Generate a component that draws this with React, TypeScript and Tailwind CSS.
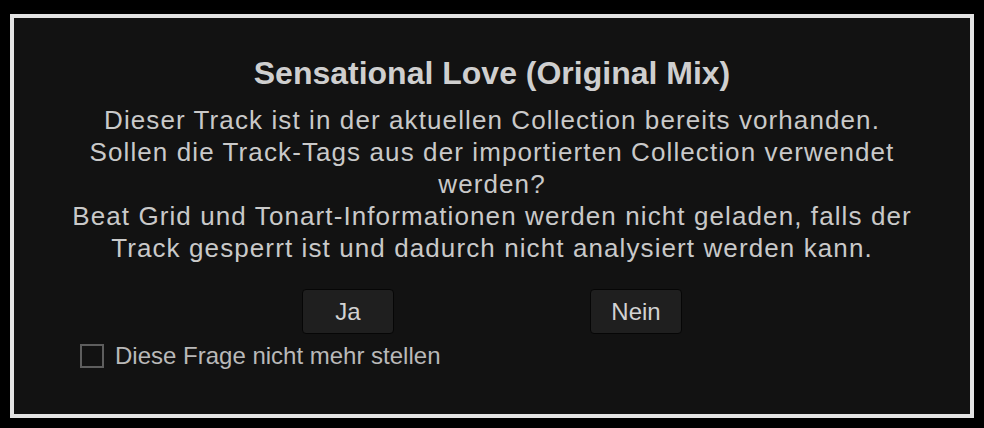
import React from "react";

const lines = [
  "Dieser Track ist in der aktuellen Collection bereits vorhanden.",
  "Sollen die Track-Tags aus der importierten Collection verwendet",
  "werden?",
  "Beat Grid und Tonart-Informationen werden nicht geladen, falls der",
  "Track gesperrt ist und dadurch nicht analysiert werden kann.",
];

export default function App() {
  return (
    <div
      className="w-[984px] h-[428px] bg-black pt-[14px] pl-[10px]"
      style={{ fontFamily: '"Liberation Sans", Arial, sans-serif' }}
    >
      <div className="w-[964px] h-[404px] border-[4px] border-[#e3e3e3] bg-[#121212] flex flex-col items-center pt-[37px]">
        <div className="text-[32px] leading-[36px] font-bold text-[#cfcfcf]">
          Sensational Love (Original Mix)
        </div>
        <div className="mt-[13px] text-[26px] leading-[32px] tracking-[1.1px] text-[#c9c9c9] text-center">
          {lines.map((l) => (
            <div key={l}>{l}</div>
          ))}
        </div>
        <div className="mt-[25px] flex gap-[196px]">
          <button className="w-[92px] h-[45px] rounded-[4px] border border-[#060606] bg-[#1f1f1f] text-[24px] leading-[24px] text-[#d2d2d2]">
            Ja
          </button>
          <button className="w-[92px] h-[45px] rounded-[4px] border border-[#060606] bg-[#1f1f1f] text-[24px] leading-[24px] text-[#d2d2d2]">
            Nein
          </button>
        </div>
        <div className="self-start ml-[66px] mt-[10px] flex items-center h-[24px] gap-[11px]">
          <div className="w-[24px] h-[24px] border-2 border-[#5e5e5e] bg-[#121212]" />
          <span className="text-[24px] leading-[24px] text-[#b9b9b9]">
            Diese Frage nicht mehr stellen
          </span>
        </div>
      </div>
    </div>
  );
}
